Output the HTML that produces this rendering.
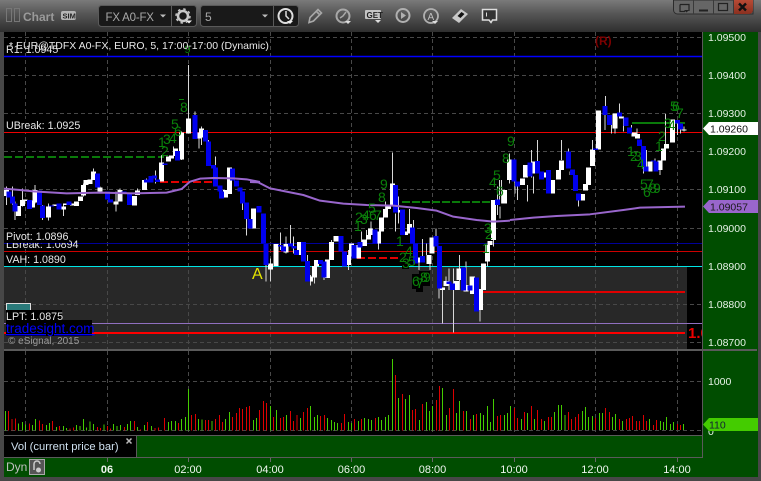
<!DOCTYPE html>
<html><head><meta charset="utf-8"><title>Chart</title>
<style>
html,body{margin:0;padding:0;background:#444;width:761px;height:481px;overflow:hidden}
svg{display:block;font-family:"Liberation Sans",sans-serif}
</style></head><body>
<svg width="761" height="481" viewBox="0 0 761 481" xmlns="http://www.w3.org/2000/svg">
<defs><linearGradient id="tb" x1="0" y1="0" x2="0" y2="1"><stop offset="0" stop-color="#7a7a7a"/><stop offset=".4" stop-color="#585858"/><stop offset="1" stop-color="#2e2e2e"/></linearGradient>
<linearGradient id="cl" x1="0" y1="0" x2="0" y2="1"><stop offset="0" stop-color="#b84a35"/><stop offset="1" stop-color="#8a3020"/></linearGradient></defs>
<rect width="761" height="481" fill="#474747"/>
<rect width="761" height="32" fill="url(#tb)"/>
<!-- title -->
<path d="M6.500 8.500h5v13h-5zM14.500 8.500h5v13h-5z" fill="none" stroke="#777"/>
<text x="23" y="21" font-size="12" font-weight="bold" fill="#9a9a9a">Chart</text>
<rect x="61" y="11" width="15" height="9" rx="2" fill="#b5b5b5"/>
<text x="62.500" y="18.500" font-size="7.500" font-weight="bold" fill="#222">SIM</text>
<!-- combos -->
<rect x="98.500" y="5.500" width="98" height="21" rx="3" fill="#191919" stroke="#5a5a5a"/>
<path d="M171.500 6v20" stroke="#5a5a5a"/>
<text x="105.500" y="21" font-size="11.500" letter-spacing="-.2" fill="#a8a8a8">FX A0-FX</text>
<path d="M160 14.500h6l-3 3z" fill="#bbb"/>
<circle cx="183" cy="16" r="5" fill="none" stroke="#c8c8c8" stroke-width="2.500"/>
<circle cx="183" cy="16" r="7" fill="none" stroke="#c8c8c8" stroke-width="1.500" stroke-dasharray="2.500 3"/>
<path d="M186 20.500h6l-3 3z" fill="#eee"/>
<rect x="200.500" y="5.500" width="98" height="21" rx="3" fill="#191919" stroke="#5a5a5a"/>
<path d="M273.500 6v20" stroke="#5a5a5a"/>
<text x="205" y="21" font-size="12" fill="#a8a8a8">5</text>
<path d="M262 14.500h6l-3 3z" fill="#bbb"/>
<circle cx="285.500" cy="16" r="7" fill="none" stroke="#ddd" stroke-width="2"/>
<path d="M286 11v5l3 3" fill="none" stroke="#ddd" stroke-width="1.500"/>
<path d="M287 21h6l-3 3z" fill="#eee"/>
<!-- toolbar icons -->
<path d="M309 22.500l1-5 8-8 3.500 3.500-8 8zM316.500 11.500l3.500 3.500" fill="none" stroke="#a8a8a8" stroke-width="1.600"/>
<circle cx="343" cy="16" r="6.500" fill="none" stroke="#a8a8a8" stroke-width="2"/>
<path d="M340 18l3-2 3-4" fill="none" stroke="#a8a8a8" stroke-width="1.500"/>
<path d="M345 21h6l-3 3z" fill="#ddd"/>
<rect x="365" y="10" width="16" height="9" rx="1" fill="#c4c4c4"/>
<text x="366.500" y="18" font-size="8" font-weight="bold" fill="#222">GET</text>
<path d="M375 20h6l-3 3z" fill="#ddd"/>
<circle cx="403" cy="15.500" r="6.500" fill="none" stroke="#b0b0b0" stroke-width="2"/>
<path d="M401 12l5 3.500-5 3.500z" fill="#b0b0b0"/>
<circle cx="431" cy="16" r="7" fill="none" stroke="#b0b0b0" stroke-width="1.800"/>
<text x="427.500" y="20" font-size="10" fill="#c0c0c0">A</text>
<path d="M432 21h6l-3 3z" fill="#ddd"/>
<path d="M452 18l9-9 7 5-9 9z" fill="#c8c8c8"/>
<path d="M457.500 16l4-4 3 2-4 4z" fill="#111"/>
<path d="M482.500 9.500h14v10.500h-4l-1.500 2.500-2-2.500h-6.500z" fill="#333" stroke="#ddd" stroke-width="1.500"/>
<path d="M486.500 12.500v4" stroke="#ddd"/>
<!-- window buttons -->
<path d="M673.500 0v10a4 4 0 0 0 4 4h75.500V0z" fill="#666" stroke="#2c2c2c"/>
<path d="M733 0h20v10a4 4 0 0 1-4 4h-16z" fill="url(#cl)"/>
<path d="M693.500 0v14M713.500 0v14M733.500 0v14" stroke="#3a3a3a"/>
<path d="M680 4.500h9v6.500M680 4.500v7h5" fill="none" stroke="#222" stroke-width="1.200"/><path d="M684 10h5l-2.500 2.500z" fill="#222"/>
<path d="M699 10.500h9" stroke="#222" stroke-width="2"/>
<rect x="718.500" y="3.500" width="9" height="7" fill="none" stroke="#222" stroke-width="1.200"/>
<path d="M739 3.500l7 7M746 3.500l-7 7" stroke="#111" stroke-width="2.400"/>

<!-- panels -->
<rect x="703" y="32" width="55" height="445" fill="#004d00"/>
<rect x="4" y="32" width="699" height="317" fill="#000"/>
<rect x="4" y="351" width="699" height="84" fill="#000"/>
<rect x="4" y="266" width="683" height="83" fill="#282828"/>
<rect x="4" y="435" width="132" height="22" fill="#000"/>
<rect x="136" y="436" width="567" height="21" fill="#004d00"/>
<rect x="4" y="458" width="699" height="19" fill="#004d00"/>
<path d="M4 349.500h753M4 350.500h753M4 435.500h699M136.500 435v22M4 457.500h699M702.500 32v426" stroke="#5a5a5a" fill="none"/>
<path d="M107.500 458v4M188.500 458v4M270.500 458v4M351.500 458v4M432.500 458v4M514.500 458v4M595.500 458v4M677.500 458v4" stroke="#666"/>

<!-- grid -->
<path d="M4 37.500h698M4 75.500h698M4 113.500h698M4 151.500h698M4 189.500h698M4 228.500h698M4 304.500h698M4 342.500h698M4 381.500h698M4 430.500h698" stroke="#484848" stroke-dasharray="4 3" fill="none"/>
<path d="M25.500 32v317M107.500 32v317M188.500 32v317M270.500 32v317M351.500 32v317M432.500 32v317M514.500 32v317M595.500 32v317M677.500 32v317M25.500 351v84M107.500 351v84M188.500 351v84M270.500 351v84M351.500 351v84M432.500 351v84M514.500 351v84M595.500 351v84M677.500 351v84" stroke="#484848" stroke-dasharray="4 3" fill="none"/>

<!-- levels -->
<path d="M4 56.500h698" stroke="#0000ff" stroke-width="1.500"/>
<path d="M4 132.500h698" stroke="#ee0000"/>
<path d="M4 243.500h698" stroke="#000099"/>
<path d="M4 251.500h698" stroke="#cc0000"/>
<path d="M4 266.500h698" stroke="#00e5e5"/>
<path d="M4 323.500h698" stroke="#9070c0"/>
<path d="M4 333h681" stroke="#ff0000" stroke-width="2"/>
<path d="M483 292h202" stroke="#e00000" stroke-width="2"/>
<path d="M632 123h53" stroke="#0a7a0a" stroke-width="2"/>
<path d="M4 157h160" stroke="#0a7a0a" stroke-width="2" stroke-dasharray="8 3"/>
<path d="M402 202h91" stroke="#0a7a0a" stroke-width="2" stroke-dasharray="8 2"/>
<path d="M160 182h58" stroke="#e00000" stroke-width="2" stroke-dasharray="8 3"/>
<path d="M357 258h43" stroke="#e00000" stroke-width="2" stroke-dasharray="8 3"/>

<!-- wicks -->
<g fill="none" stroke="#d8d8d8" shape-rendering="crispEdges">
<path transform="translate(0,90) scale(.3333)" stroke-width="3" d="M20 290V345M37 290V345M45 335V390M68 295V350M105 285V340M128 345V390M145 340V392M190 340V378M250 280V320M280 235V270M300 290V310M348 305V365M360 295V335M388 310V345M412 295V315M440 265V300M467 242V280M485 195V275M520 170V200M545 125V210M565 -75V130M585 65V147M597 127V175M605 110V165M625 150V228M647 200V290M665 305V325M688 232V312M727 305V360M740 337V437"/>
<path transform="translate(250,140) scale(.3333)" stroke-width="3" d="M62 355V425M48 375V425M92 277V330M108 290V340M122 255V320M130 290V340M172 345V425M182 405V437M193 375V430M222 400V420M245 300V360M295 330V390M335 275V320M350 270V300M363 245V285M385 310V328M407 185V232M427 37V200M437 220V275M445 170V250M478 207V260M490 240V275M507 368V390M517 297V350M530 310V345M540 370V390M558 265V290M577 445V550M567 445V475M588 410V423M597 385V450M610 385V578M628 345V450M648 365V450M660 410V450M690 510V545M712 365V380M730 300V320M742 140V225M755 120V190"/>
<path transform="translate(490,90) scale(.3333)" stroke-width="3" d="M30 350V385M28 270V330M58 190V280M75 275V310M82 290V330M112 285V335M125 180V262M143 150V215M130 260V310M215 150V210M235 175V235M240 245V255M265 310V350M307 150V178M347 18V75M345 75V120M365 75V130M375 110V130M388 40V68M400 85V125M425 105V130M441 115V145M460 230V250M470 180V245M495 205V245M510 240V255M526 72V162M562 100V135M572 118V130M582 110V125"/>
</g>

<!-- white candles -->
<g fill="none" stroke="#fff" stroke-width="15" shape-rendering="crispEdges">
<path transform="translate(0,90) scale(.3333)" d="M20 300V318M55 348V378M68 330V348M75 328V333M98 332V352M105 300V338M145 350V382M165 343V348M190 350V358M197 340V345M217 340V347M230 335V348M241 320V333M250 285V317M258 270V285M270 268V282M280 245V270M300 293V305M348 335V343M360 300V335M403 318V347M412 302V315M434 270V300M485 218V275M505 200V215M515 197V205M526 175V198M545 128V208M565 85V130M597 127V145M605 115V142M677 300V322M688 232V312M750 395V415"/>
<path transform="translate(250,140) scale(.3333)" d="M10 205V265M62 370V388M78 312V378M108 312V338M148 306V345M182 410V425M193 378V412M200 360V380M232 358V414M245 306V360M258 288V305M295 345V375M304 310V350M325 315V355M343 298V318M355 285V298M362 265V285M385 275V310M394 232V275M407 207V232M415 200V207M427 130V200M445 210V218M467 275V285M478 252V280M507 352V368M537 345V372M546 292V340M577 443V450M588 423V438M620 423V450M627 385V420M648 435V455M667 410V462M691 447V510M700 370V450M712 315V365M720 303V315M730 180V300"/>
<path transform="translate(490,90) scale(.3333)" d="M43 300V340M58 208V270M97 265V285M107 225V263M130 215V250M165 248V262M187 270V310M205 240V268M215 212V240M277 312V332M287 282V302M296 232V285M307 178V228M326 62V178M375 70V115M395 80V85M432 128V140M442 132V145M480 215V245M510 212V240M520 175V212M530 162V175M548 88V157M582 118V122"/>
</g>
<!-- blue candles -->
<g fill="none" stroke="#0000ee" stroke-width="15" shape-rendering="crispEdges">
<path transform="translate(0,90) scale(.3333)" d="M27 305V322M37 320V340M45 340V365M88 330V357M118 302V345M128 347V384M155 346V350M177 340V358M207 335V345M292 250V292M322 304V328M332 328V338M372 305V310M388 312V345M440 268V278M453 258V278M463 256V266M473 268V276M495 220V225M533 183V212M585 75V147M617 120V155M625 155V228M640 225V235M647 232V290M660 287V305M665 305V325M697 235V272M710 272V290M720 292V305M727 305V340M740 337V387M750 387V415"/>
<path transform="translate(250,140) scale(.3333)" d="M27 198V218M40 220V310M48 312V375M92 315V320M100 320V335M122 310V320M132 318V325M140 330V345M160 306V365M172 363V425M212 360V372M222 365V413M273 288V335M283 335V380M312 315V355M330 306V322M375 268V310M437 135V218M457 208V285M487 262V310M497 310V370M517 348V368M558 288V320M568 318V445M597 425V432M607 430V450M640 382V452M660 436V452M680 412V515M742 178V195"/>
<path transform="translate(490,90) scale(.3333)" d="M22 342V345M72 208V275M82 275V290M120 218V260M143 213V250M155 245V268M175 240V310M235 185V235M247 238V255M257 255V303M265 310V332M317 176V180M345 48V75M358 75V105M388 68V80M408 82V108M418 112V130M449 148V168M460 168V230M468 230V245M490 212V215M498 215V245M562 90V100M572 100V118"/>
</g>

<!-- moving average -->
<g fill="none" stroke="#9966cc" stroke-width="6" stroke-linejoin="round">
<path transform="translate(0,90) scale(.3333)" d="M12 296L60 300 100 304 200 310 300 308 400 310 500 308 545 297 570 275 600 266 640 264 700 265 740 268 780 276"/>
<path transform="translate(250,140) scale(.3333)" d="M0 126L25 127 60 145 100 153 160 165 210 182 280 191 350 195 430 197 500 204 560 212 610 230 680 240 730 245 780 242"/>
<path transform="translate(490,90) scale(.3333)" d="M60 390L130 383 200 378 300 373 400 360 450 353 585 350"/>
</g>

<!-- TD labels -->
<rect x="402" y="266" width="7" height="3" fill="#000"/>
<rect x="412" y="274" width="11" height="15" fill="#000"/>
<rect x="416" y="287" width="7" height="5" fill="#000"/>
<rect x="419" y="271" width="11" height="15" fill="#000"/>
<g font-size="14" fill="#0a800a">
<text x="180" y="112">8</text><path d="M179 99.500h5" stroke="#0a800a"/>
<text x="171" y="129">5</text><text x="174" y="136">6</text><text x="158" y="147">1</text><text x="163" y="144">3</text><text x="169" y="143">4</text><text x="161" y="156">2</text>
<text x="184.500" y="53" font-size="11">9</text>
<text x="380" y="189">9</text><text x="378" y="202">8</text><text x="368" y="213">5</text><text x="362" y="220">4</text><text x="369" y="220">6</text><text x="374" y="220">7</text><text x="355" y="222">2</text><text x="360" y="224">3</text><text x="354" y="231">1</text>
<text x="396" y="246">1</text><text x="399" y="262">2</text><text x="405" y="256">4</text><text x="408" y="266">5</text><text x="402" y="268">3</text>
<text x="412" y="286">6</text><text x="416" y="288">7</text><text x="420" y="282">8</text><text x="423" y="282">9</text>
<text x="493" y="180">5</text><text x="489" y="187">4</text><text x="496" y="196">6</text><text x="484" y="233">3</text><text x="485" y="239">2</text><text x="482" y="253">1</text>
<text x="507" y="146">9</text><text x="502" y="163">8</text>
<text x="670" y="111">5</text><text x="672" y="111">6</text><text x="676" y="118">7</text><text x="664" y="128">3</text><text x="668" y="130">4</text><text x="658" y="141">2</text><text x="655" y="151">1</text>
<text x="627" y="156">1</text><text x="630" y="161">2</text><text x="634" y="161">3</text><text x="637" y="169">4</text><text x="640" y="189">5</text><text x="646" y="189">7</text><text x="643" y="197">6</text><text x="649" y="193">8</text><text x="653" y="193">9</text>
</g>

<!-- labels -->
<g font-size="10.700" fill="#e8e8e8">
<text x="6" y="53">R1: 1.0945</text>
<text x="9" y="49" font-size="10.500">* EUR@TDFX A0-FX, EURO, 5, 17:00-17:00 (Dynamic)</text>
<rect x="6" y="119" width="74" height="13" fill="#000"/>
<text x="6" y="129">UBreak: 1.0925</text>
<text x="6" y="248">LBreak: 1.0894</text>
<rect x="5" y="230" width="64" height="13" fill="#000"/>
<text x="6" y="240">Pivot: 1.0896</text>
<text x="6" y="263">VAH: 1.0890</text>
</g>
<text x="595" y="45" font-size="12" font-weight="bold" fill="#7d0000">(R)</text>
<text x="252" y="279" font-size="16" fill="#e6e600">A</text>
<rect x="6.500" y="303.500" width="24" height="9" fill="#2a7a7a" stroke="#ddd"/>
<rect x="6" y="310" width="56" height="11" fill="#000"/>
<text x="6" y="320" font-size="10.700" fill="#e8e8e8">LPT: 1.0875</text>
<rect x="6" y="320" width="86" height="16" fill="#000"/>
<text x="6" y="333" font-size="13.500" fill="#0000ff" text-decoration="underline">tradesight.com</text>
<text x="8" y="344" font-size="10" fill="#9a9a9a">© eSignal, 2015</text>
<svg x="687" y="322" width="15" height="20"><text x="1" y="16" font-size="15" font-weight="bold" fill="#ee0000">1.0</text></svg>

<!-- volume -->
<g fill="none" stroke-width="3" shape-rendering="crispEdges">
<path transform="translate(0,350) scale(.3333)" stroke="#44cc00" d="M16 183V241M56 220V241M67 216V241M77 224V241M97 225V241M107 207V241M139 225V241M149 219V241M169 231V241M190 228V241M199 234V241M229 225V241M240 228V241M250 207V241M260 232V241M270 214V241M280 222V241M312 223V241M340 222V241M351 228V241M361 225V241M382 222V241M392 213V241M412 231V241M433 225V241M454 228V241M505 216V241M515 213V241M526 213V241M545 207V241M556 201V241M566 117V241M595 207V241M606 208V241M636 213V241M677 207V241M688 186V241M760 210V241M769 204V241"/>
<path transform="translate(0,350) scale(.3333)" stroke="#dd0000" d="M25 183V241M36 207V241M46 205V241M88 220V241M118 212V241M128 222V241M157 213V241M179 228V241M210 236V241M220 233V241M292 231V241M302 234V241M322 228V241M332 235V241M373 231V241M404 213V241M422 238V241M443 216V241M465 234V241M475 232V241M493 204V241M535 219V241M575 195V241M586 192V241M616 210V241M626 210V241M646 207V241M658 195V241M667 216V241M698 201V241M710 189V241M718 174V241M728 177V241M739 171V241M748 168V241M778 180V241"/>
<path transform="translate(260,350) scale(.3333)" stroke="#44cc00" d="M31 168V241M49 180V241M80 195V241M121 204V241M151 168V241M163 201V241M172 195V241M202 204V241M214 210V241M223 216V241M232 219V241M265 216V241M274 219V241M295 213V241M313 204V241M325 207V241M334 210V241M355 201V241M364 210V241M377 201V241M385 195V241M397 27V241M415 144V241M436 147V241M448 135V241M478 210V241M499 156V241M508 183V241M517 168V241M547 114V241M559 195V241M589 189V241M598 153V241M619 183V241M640 195V241M661 189V241M670 195V241M682 168V241M691 216V241M700 147V241M733 195V241M742 189V241"/>
<path transform="translate(260,350) scale(.3333)" stroke="#dd0000" d="M10 153V241M19 159V241M40 201V241M61 204V241M70 201V241M91 183V241M100 213V241M111 195V241M130 186V241M142 174V241M181 198V241M193 195V241M244 219V241M253 192V241M283 207V241M304 207V241M346 204V241M406 75V241M427 132V241M458 180V241M466 177V241M487 162V241M529 150V241M538 108V241M568 174V241M580 117V241M610 183V241M631 207V241M649 192V241M712 198V241M721 195V241"/>
<path transform="translate(510,320) scale(.3333)" stroke="#44cc00" d="M1 258V330M34 297V330M52 279V330M73 297V330M103 303V330M133 276V330M145 255V330M154 255V330M165 285V330M217 273V330M226 261V330M235 291V330M247 288V330M268 279V330M277 279V330M307 291V330M316 282V330M337 303V330M418 297V330M451 303V330M460 306V330M469 291V330M481 312V330M490 306V330M520 312V330"/>
<path transform="translate(510,320) scale(.3333)" stroke="#dd0000" d="M13 264V330M22 294V330M43 276V330M64 258V330M82 270V330M94 297V330M115 291V330M124 291V330M175 276V330M184 297V330M196 291V330M205 282V330M256 294V330M286 264V330M298 276V330M328 297V330M349 297V330M358 294V330M367 288V330M379 303V330M388 303V330M400 285V330M409 303V330M430 315V330M439 300V330M502 312V330M511 315V330"/>
</g>
<text x="11" y="450" font-size="11.200" fill="#cfe0ef">Vol (current price bar)</text>
<path d="M126.500 438.500l5 5M131.500 438.500l-5 5" stroke="#bbb" stroke-width="1.500"/>

<!-- time axis -->
<text x="6" y="471" font-size="12" fill="#c0c0c0">Dyn</text>
<rect x="29.500" y="459.500" width="15" height="15" fill="#555" stroke="#aaa"/>
<path d="M34 470v-6a3 3 0 0 1 6 0" fill="none" stroke="#ccc" stroke-width="1.500"/><circle cx="38.500" cy="470" r="2.500" fill="#ccc"/>
<g font-size="11" fill="#f0f6f0" text-anchor="middle">
<text x="107" y="473" font-weight="bold">06</text><text x="188" y="473">02:00</text><text x="270" y="473">04:00</text><text x="351.500" y="473">06:00</text><text x="432.500" y="473">08:00</text><text x="514" y="473">10:00</text><text x="595" y="473">12:00</text><text x="677" y="473">14:00</text>
</g>

<!-- price axis -->
<g font-size="10.500" fill="#e6f2e6">
<text x="708" y="41">1.09500</text><text x="708" y="79">1.09400</text><text x="708" y="117">1.09300</text><text x="708" y="155">1.09200</text><text x="708" y="193">1.09100</text><text x="708" y="232">1.09000</text><text x="708" y="270">1.08900</text><text x="708" y="308">1.08800</text><text x="708" y="346">1.08700</text>
<text x="708" y="385">1000</text><text x="708" y="435">0</text>
</g>
<path d="M703 128.500l6-6.500h49v13h-49z" fill="#fff"/>
<text x="710" y="132.500" font-size="10.500" fill="#111">1.09260</text>
<path d="M703 206.500l6-6.500h49v13h-49z" fill="#9966cc"/>
<text x="710" y="210.500" font-size="10.500" fill="#1a1a1a">1.09057</text>
<path d="M703 424.500l6-6.500h49v13h-49z" fill="#44cc00"/>
<text x="709" y="428.500" font-size="10.500" fill="#123">110</text>
</svg>
</body></html>
